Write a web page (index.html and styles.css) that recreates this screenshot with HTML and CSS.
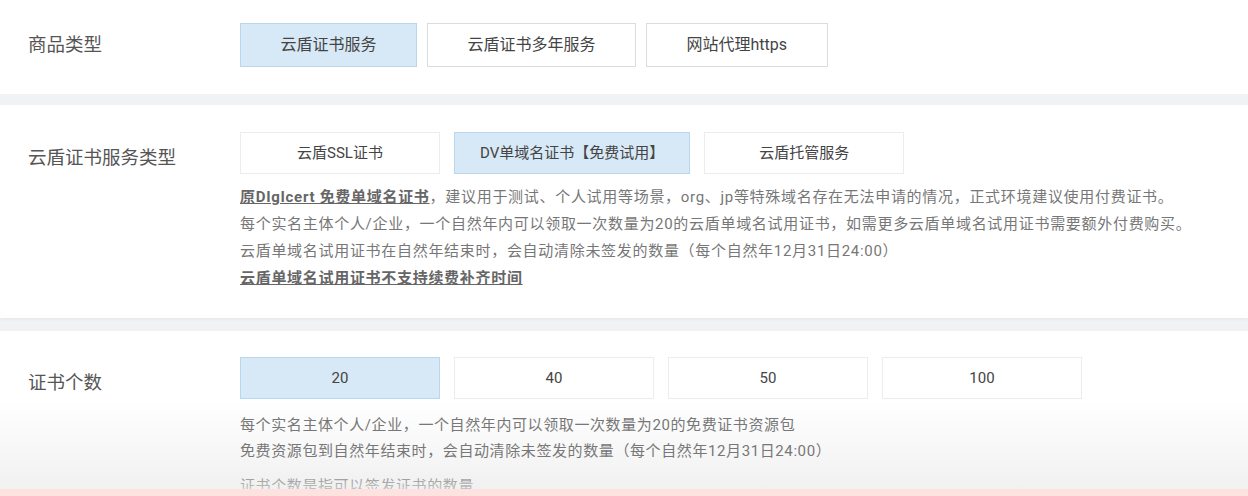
FILE: index.html
```html
<!DOCTYPE html>
<html lang="zh-CN">
<head>
<meta charset="utf-8">
<title>云盾证书服务</title>
<link rel="stylesheet" href="styles.css">
</head>
<body>
<div class="page">
  <section class="sec sec-type">
    <div class="label">商品类型</div>
    <div class="content">
      <div class="opts opts-lg">
        <div class="opt opt-lg active">云盾证书服务</div>
        <div class="opt opt-lg">云盾证书多年服务</div>
        <div class="opt opt-lg">网站代理https</div>
      </div>
    </div>
  </section>

  <section class="sec sec-service">
    <div class="label">云盾证书服务类型</div>
    <div class="content">
      <div class="opts">
        <div class="opt">云盾SSL证书</div>
        <div class="opt opt-wide active">DV单域名证书【免费试用】</div>
        <div class="opt">云盾托管服务</div>
      </div>
      <div class="desc">
        <p><a class="strong">原DIgIcert 免费单域名证书</a>，建议用于测试、个人试用等场景，org、jp等特殊域名存在无法申请的情况，正式环境建议使用付费证书。</p>
        <p>每个实名主体个人/企业，一个自然年内可以领取一次数量为20的云盾单域名试用证书，如需更多云盾单域名试用证书需要额外付费购买。</p>
        <p>云盾单域名试用证书在自然年结束时，会自动清除未签发的数量（每个自然年12月31日24:00）</p>
        <p><a class="strong">云盾单域名试用证书不支持续费补齐时间</a></p>
      </div>
    </div>
  </section>

  <section class="sec sec-count">
    <div class="label">证书个数</div>
    <div class="content">
      <div class="opts">
        <div class="opt active">20</div>
        <div class="opt">40</div>
        <div class="opt">50</div>
        <div class="opt">100</div>
      </div>
      <div class="desc desc-count">
        <p>每个实名主体个人/企业，一个自然年内可以领取一次数量为20的免费证书资源包</p>
        <p>免费资源包到自然年结束时，会自动清除未签发的数量（每个自然年12月31日24:00）</p>
        <p class="gap-top">证书个数是指可以签发证书的数量</p>
      </div>
    </div>
  </section>

  <div class="fade"></div>
  <div class="bottom-bar"></div>
</div>
</body>
</html>
```

FILE: styles.css
```css
html, body {
  margin: 0;
  padding: 0;
}
body {
  background: #f1f2f4;
  font-family: Roboto, "Noto Sans CJK SC", sans-serif;
  color: #555;
  width: 1248px;
  height: 496px;
  overflow: hidden;
}
.page {
  position: relative;
  height: 496px;
  overflow: hidden;
}
.sec {
  background: #fff;
  display: flex;
  align-items: flex-start;
}
.sec-type {
  padding: 23px 0 27px;
  margin-bottom: 11px;
}
.sec-service {
  padding: 27px 0 26px;
  margin-bottom: 13px;
  box-shadow: 0 2px 3px rgba(0,0,0,0.04);
}
.sec-count {
  padding: 26px 0 40px;
  background: linear-gradient(to bottom, #fff 0, #fff 70px, #f1f1f1 157px);
}
.label {
  width: 212px;
  padding-left: 28px;
  font-size: 18.5px;
  color: #555;
  line-height: 42px;
  flex-shrink: 0;
}
.sec-type .label {
  line-height: 44px;
}
.sec-service .label,
.sec-count .label {
  padding-top: 5px;
}
.content {
  flex: 1;
}
.opts {
  display: flex;
  gap: 14px;
}
.opts-lg {
  gap: 10px;
}
.opt {
  box-sizing: border-box;
  min-width: 200px;
  height: 42px;
  line-height: 40px;
  border: 1px solid #ececec;
  background: #fff;
  text-align: center;
  font-size: 15px;
  color: #444;
  padding: 0 20px;
}
.opt-wide {
  padding: 0 25px;
}
.opt-lg {
  min-width: 0;
  height: 44px;
  line-height: 42px;
  font-size: 16px;
  padding: 0 39.5px;
  border-color: #dcdcdc;
}
.opt.active {
  background: #d7e9f6;
  border-color: #b9d7ef;
}
.desc {
  margin-top: 10px;
  font-size: 15px;
  line-height: 27px;
  color: #777;
  letter-spacing: 0.7px;
}
.desc p {
  margin: 0;
}
.desc-count {
  margin-top: 13px;
  line-height: 26px;
  letter-spacing: 0.6px;
}
.desc .gap-top {
  margin-top: 9px;
}
.strong {
  color: #666;
  font-weight: bold;
  text-decoration: underline;
}
.fade {
  position: absolute;
  left: 0;
  right: 0;
  top: 466px;
  height: 23px;
  background: linear-gradient(to bottom, rgba(241,241,241,0), rgba(241,241,241,0.6));
  pointer-events: none;
}
.bottom-bar {
  position: absolute;
  left: 0;
  right: 0;
  top: 489px;
  height: 7px;
  background: #fde2df;
}
```
